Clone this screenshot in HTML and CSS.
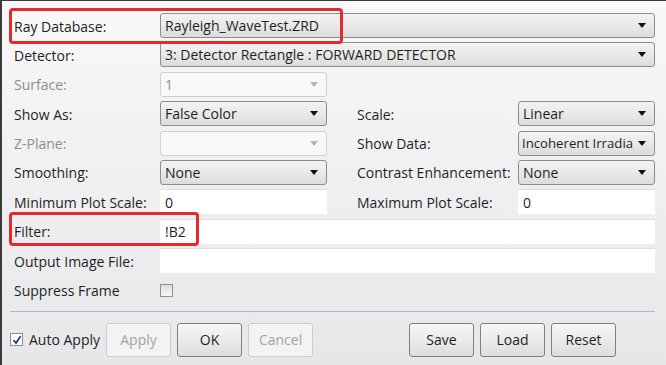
FILE: index.html
```html
<!DOCTYPE html>
<html lang="en">
<head>
  <meta charset="UTF-8">
  <title>Detector Viewer Settings</title>
  <link rel="stylesheet" href="styles.css">
</head>
<body>
  <div class="dialog">
    <div class="form">
      <div class="label">Ray Database:</div>
      <div class="combo wide"><span>Rayleigh_WaveTest.ZRD</span><i class="arrow"></i></div>

      <div class="label">Detector:</div>
      <div class="combo wide"><span>3: Detector Rectangle : FORWARD DETECTOR</span><i class="arrow"></i></div>

      <div class="label disabled">Surface:</div>
      <div class="combo off"><span>1</span><i class="arrow"></i></div>
      <div></div><div></div>

      <div class="label">Show As:</div>
      <div class="combo"><span>False Color</span><i class="arrow"></i></div>
      <div class="label right">Scale:</div>
      <div class="combo"><span>Linear</span><i class="arrow"></i></div>

      <div class="label disabled">Z-Plane:</div>
      <div class="combo off"><span></span><i class="arrow"></i></div>
      <div class="label right">Show Data:</div>
      <div class="combo tight"><span>Incoherent Irradia</span><i class="arrow"></i></div>

      <div class="label">Smoothing:</div>
      <div class="combo"><span>None</span><i class="arrow"></i></div>
      <div class="label right">Contrast Enhancement:</div>
      <div class="combo"><span>None</span><i class="arrow"></i></div>

      <div class="label">Minimum Plot Scale:</div>
      <div class="input">0</div>
      <div class="label right">Maximum Plot Scale:</div>
      <div class="input">0</div>

      <div class="label">Filter:</div>
      <div class="input wide">!B2</div>

      <div class="label">Output Image File:</div>
      <div class="input wide"></div>

      <div class="label">Suppress Frame</div>
      <div class="check-cell"><span class="box"></span></div>
    </div>

    <div class="separator"></div>

    <div class="actions">
      <label class="auto">
        <span class="box checked">
          <svg width="10" height="10" viewBox="0 0 10 10"><path d="M1.5 5.2 L4 8 L8.6 1.2" fill="none" stroke="#2b3a8c" stroke-width="1.8"/></svg>
        </span>
        Auto Apply
      </label>
      <button class="btn" disabled>Apply</button>
      <button class="btn">OK</button>
      <button class="btn" disabled>Cancel</button>
      <div class="spacer"></div>
      <button class="btn">Save</button>
      <button class="btn">Load</button>
      <button class="btn">Reset</button>
    </div>

    <!-- red highlight marks drawn over the dialog -->
    <div class="mark mark-db"></div>
    <div class="mark mark-filter"></div>
  </div>
</body>
</html>
```

FILE: styles.css
```css
body {
  margin: 0;
  font-family: "Open Sans", "Noto Sans", sans-serif;
  font-size: 14px;
  color: #1f1f1f;
}
.dialog {
  position: relative;
  width: 664px;
  height: 364px;
  border-top: 1px solid #3a3a3a;
  border-left: 2px solid #3a3a3a;
  background: linear-gradient(#f8f8f8, #eeeef0 60%, #e6e7e9);
  overflow: hidden;
}
.form {
  display: grid;
  grid-template-columns: 146px 167px 191px 137px;
  grid-auto-rows: 26px;
  row-gap: 3.4px;
  padding: 12px 0 0 12px;
}
.label {
  display: flex;
  align-items: center;
  white-space: nowrap;
}
.label.right {
  padding-left: 30px;
}
.label.disabled {
  color: #8d8d8d;
}
.wide {
  grid-column: 2 / 5;
}
.combo {
  display: flex;
  align-items: center;
  justify-content: space-between;
  box-sizing: border-box;
  height: 25px;
  padding: 0 8px 0 4px;
  border: 1px solid #8c8d8e;
  border-radius: 3px;
  background: linear-gradient(#f3f3f3, #e9e9e9 50%, #dcdcdc);
  overflow: hidden;
}
.combo.tight {
  padding: 0 8px 0 3px;
  font-size: 13.2px;
}
.combo span {
  white-space: nowrap;
}
.combo .arrow {
  flex: none;
  width: 0;
  height: 0;
  margin-left: 4px;
  border-left: 4px solid transparent;
  border-right: 4px solid transparent;
  border-top: 5px solid #111;
}
.combo.off {
  border-color: #cfd0d1;
  background: #f8f8f8;
  color: #8d8d8d;
}
.combo.off .arrow {
  border-top-color: #b5b5b5;
}
.input {
  display: flex;
  align-items: center;
  box-sizing: border-box;
  height: 25px;
  padding: 0 5px;
  background: #fff;
  border-top: 1px solid #dedede;
}
.check-cell {
  display: flex;
  align-items: center;
}
.box {
  display: inline-flex;
  align-items: center;
  justify-content: center;
  box-sizing: border-box;
  width: 13px;
  height: 13px;
  border: 1px solid #8e8f8f;
  background: linear-gradient(#dcdcdc, #f6f6f6);
}
.box.checked {
  background: #fff;
}
.separator {
  height: 1px;
  margin: 7px 11px 0 8px;
  background: #a9bccd;
}
.actions {
  display: flex;
  align-items: center;
  gap: 6px;
  margin: 11px 0 0 8px;
  padding-right: 50px;
}
.auto {
  display: flex;
  align-items: center;
  gap: 6px;
}
.spacer {
  flex: 1;
}
.btn {
  width: 65px;
  height: 34px;
  font: inherit;
  color: #1f1f1f;
  border: 1px solid #7f8081;
  border-radius: 3px;
  background: linear-gradient(#f6f6f6, #ebebeb 50%, #dcdcdc);
}
.btn:disabled {
  color: #a3a3a3;
  border-color: #cbcbcb;
  background: #f3f3f3;
}
.mark {
  position: absolute;
  border: 3px solid #e42a2c;
  border-radius: 4px;
  box-sizing: border-box;
}
.mark-db {
  left: 7px;
  top: 7px;
  width: 334px;
  height: 36px;
}
.mark-filter {
  left: 7px;
  top: 211px;
  width: 190px;
  height: 34px;
}
```
